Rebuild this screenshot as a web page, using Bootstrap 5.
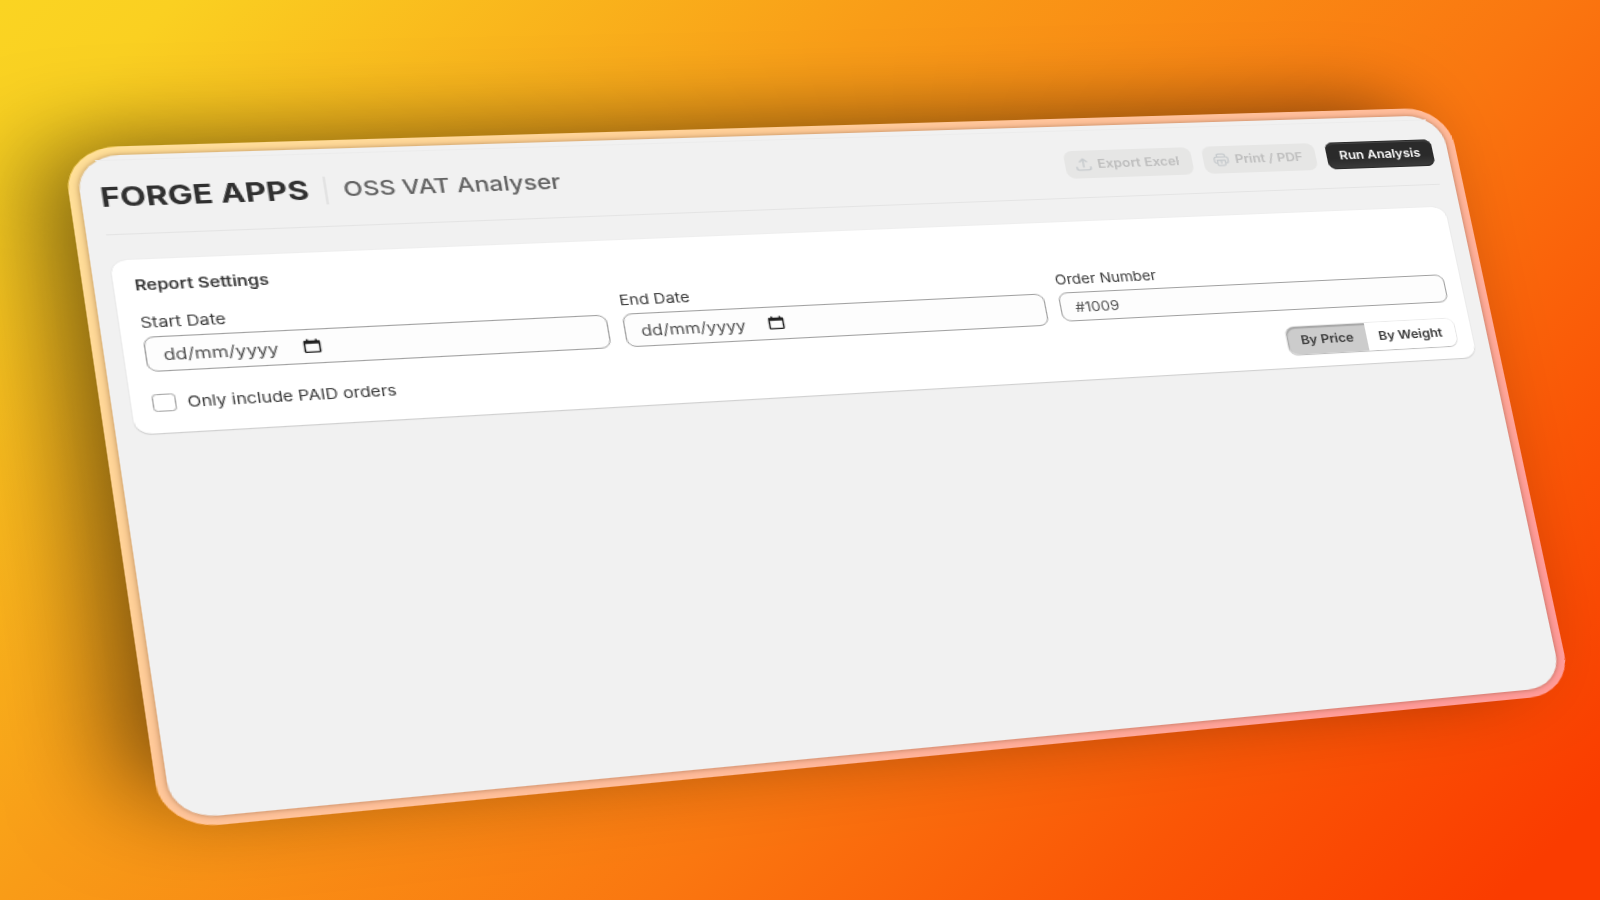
<!DOCTYPE html>
<html lang="en">
<head>
<meta charset="utf-8">
<meta name="viewport" content="width=device-width, initial-scale=1">
<title>OSS VAT Analyser</title>
<link href="https://cdn.jsdelivr.net/npm/bootstrap@5.3.0/dist/css/bootstrap.min.css" rel="stylesheet">
<style>
  body {
    font-family: Inter, "Liberation Sans", sans-serif;
    font-size: 13px;
    line-height: 20px;
    color: #383838;
    background: linear-gradient(135deg, #fad422 0%, #fad021 7%, #f99c17 36%, #fa7710 62%, #fa5606 80%, #fa3c00 96%);
  }
  /* The tilted window: its four corners are projected by the script below */
  .tilt-frame {
    width: 71vw;
    height: 606px;
    padding: 8px;
    border-radius: 40px;
    background: linear-gradient(140deg, #ffe098 0%, #ffcf98 28%, #ffc49a 40%, #ffba9a 62%, #ffab99 75%, #ff9b98 90%);
    box-shadow: -30px -14px 80px -14px rgba(0, 0, 0, .56);
    transform-origin: 0 0;
  }
  .window-pane {
    border-radius: 32px;
    background: #f1f1f1;
    box-shadow: 0 0 5px rgba(90, 40, 0, .45);
    padding: 4px 14px 14px;
  }
  .app-header {
    height: 69px;
    border-top: 1px solid #ececec;
    border-bottom: 1px solid #e4e4e4;
  }
  .header-brand { gap: 12px; }
  .header-actions { gap: 10px; }
  .app-brand { font-size: 24px; line-height: 28px; font-weight: 650; color: #303030; }
  .app-title { font-size: 19px; line-height: 28px; color: #616161; }
  .brand-rule { width: 2px; height: 26px; background: #e3e3e3; }
  .app-btn {
    font-size: 12px;
    line-height: 16px;
    font-weight: 600;
    height: 28px;
    padding: 0 12px;
    border: 0;
    border-radius: 8px;
  }
  .app-btn:disabled { background: #e6e6e5; color: #bdbdbd; opacity: 1; padding-left: 8px; }
  .app-btn:disabled svg { stroke: #c6cacd; }
  .app-btn-dark, .app-btn-dark:hover {
    color: #fff;
    background: linear-gradient(#2a2a2a 60%, #3c3c3c);
    box-shadow: inset 0 0 0 1px #2b2b2b, inset 0 2px 0 #454545;
  }
  .settings-card {
    margin-top: 23px;
    padding: 15px 15px 13px;
    border-radius: 12px;
    background: #fff;
    box-shadow: 0 1px 1px rgba(0, 0, 0, .14), 0 0 1px rgba(0, 0, 0, .14);
  }
  .settings-card h2 { font-size: 13px; line-height: 16px; font-weight: 600; margin-bottom: 16px; }
  .settings-fields { --bs-gutter-x: 12px; }
  .field-label { display: block; margin-bottom: 3px; }
  .field-box, .field-box:focus {
    font-size: 13px;
    line-height: 20px;
    height: 29px;
    padding: 0 12px;
    border: 1px solid #a0a0a0;
    border-radius: 8px;
    background: #fdfdfd;
    color: #505050;
  }
  .field-box::placeholder { color: #505050; }
  .field-date, .field-date:focus { height: 32px; font-size: 14px; }
  .date-glyph { position: absolute; left: 114px; top: 9px; }
  .settings-foot { margin-top: 14px; }
  .paid-check { width: 17px; height: 16px; border: 1px solid #a8a8a8; border-radius: 4px; margin: 0; }
  .basis-group { border-radius: 8px; box-shadow: 0 1px 1px rgba(0, 0, 0, .22), 0 0 0 1px #ebebeb; }
  .basis-group .app-btn { background: #fff; color: #383838; }
  .basis-group .app-btn.active { background: #cccccc; box-shadow: inset 1px 2px 1px rgba(0, 0, 0, .18); }
</style>
</head>
<body class="vh-100 overflow-hidden">
<div class="tilt-frame" id="tiltFrame">
  <main class="window-pane h-100">
    <header class="app-header d-flex align-items-center justify-content-between">
      <div class="header-brand d-flex align-items-center">
        <span class="app-brand">FORGE APPS</span>
        <span class="brand-rule"></span>
        <h1 class="app-title m-0">OSS VAT Analyser</h1>
      </div>
      <div class="header-actions d-flex">
        <button type="button" class="btn app-btn d-flex align-items-center" disabled>
          <svg class="me-1" width="16" height="16" viewBox="0 0 16 16" fill="none" stroke-width="1.4" stroke-linecap="round" stroke-linejoin="round"><path d="M8 10.500V2.500M5 5.300 8 2.400l3 2.900M2 10.600v1.200c0 1 .8 1.800 1.800 1.800h8.400c1 0 1.800-.8 1.800-1.800v-1.200"/></svg>
          Export Excel
        </button>
        <button type="button" class="btn app-btn d-flex align-items-center" disabled>
          <svg class="me-1" width="16" height="16" viewBox="0 0 16 16" fill="none" stroke-width="1.3" stroke-linecap="round" stroke-linejoin="round"><path d="M4.400 5V3.600c0-.9.6-1.500 1.500-1.500h4.200c.9 0 1.500.6 1.500 1.500V5M4.400 11.400h-.6c-1.100 0-1.900-.8-1.900-1.900V7.200c0-1.200.9-2.100 2.100-2.100h8c1.200 0 2.100.9 2.100 2.100v2.300c0 1.100-.8 1.900-1.900 1.900h-.6M4.500 8.500h7v3.900c0 .9-.6 1.500-1.500 1.500H6c-.9 0-1.500-.6-1.500-1.500zM8 8.500v3"/></svg>
          Print / PDF
        </button>
        <button type="button" class="btn app-btn app-btn-dark">Run Analysis</button>
      </div>
    </header>

    <form class="settings-card">
      <h2>Report Settings</h2>
      <div class="row settings-fields">
        <div class="col-4">
          <label class="field-label" for="startDate">Start Date</label>
          <div class="position-relative">
            <input type="text" class="form-control field-box field-date" id="startDate" placeholder="dd/mm/yyyy">
            <svg class="date-glyph" width="14" height="14" viewBox="0 0 14 14"><path fill="#1f1f1f" fill-rule="evenodd" d="M3 .5h1.400v1.200h5.200V.5H11v1.200h1c.7 0 1.200.5 1.200 1.200v8.900c0 .7-.5 1.200-1.200 1.200H2c-.7 0-1.200-.5-1.200-1.200V2.900c0-.7.5-1.200 1.200-1.200h1zM2.100 4.700v7h9.800v-7z"/></svg>
          </div>
        </div>
        <div class="col-4">
          <label class="field-label" for="endDate">End Date</label>
          <div class="position-relative">
            <input type="text" class="form-control field-box field-date" id="endDate" placeholder="dd/mm/yyyy">
            <svg class="date-glyph" width="14" height="14" viewBox="0 0 14 14"><path fill="#1f1f1f" fill-rule="evenodd" d="M3 .5h1.400v1.200h5.200V.5H11v1.200h1c.7 0 1.200.5 1.200 1.200v8.900c0 .7-.5 1.200-1.200 1.200H2c-.7 0-1.200-.5-1.200-1.200V2.900c0-.7.5-1.200 1.200-1.200h1zM2.100 4.700v7h9.800v-7z"/></svg>
          </div>
        </div>
        <div class="col-4">
          <label class="field-label" for="orderNumber">Order Number</label>
          <input type="text" class="form-control field-box" id="orderNumber" placeholder="#1009">
        </div>
      </div>
      <div class="settings-foot d-flex align-items-center justify-content-between">
        <div class="d-flex align-items-center gap-2">
          <input type="checkbox" class="form-check-input paid-check" id="paidOnly">
          <label for="paidOnly">Only include PAID orders</label>
        </div>
        <div class="btn-group basis-group" role="group" aria-label="Analysis basis">
          <button type="button" class="btn app-btn active">By Price</button>
          <button type="button" class="btn app-btn">By Weight</button>
        </div>
      </div>
    </form>
  </main>
</div>
<script src="https://cdn.jsdelivr.net/npm/bootstrap@5.3.0/dist/js/bootstrap.bundle.min.js"></script>
<script>
  // Corners of the tilted window as fractions of the viewport: TL, TR, BR, BL
  const corners = [[0.0388, 0.1644], [0.9041, 0.1193], [0.9830, 0.7706], [0.1015, 0.9227]];

  function projectFrame() {
    const el = document.getElementById('tiltFrame');
    const w = el.offsetWidth, h = el.offsetHeight;
    const [[x0, y0], [x1, y1], [x2, y2], [x3, y3]] =
      corners.map(([x, y]) => [x * window.innerWidth, y * window.innerHeight]);
    const dx1 = x1 - x2, dx2 = x3 - x2, sx = x0 - x1 + x2 - x3;
    const dy1 = y1 - y2, dy2 = y3 - y2, sy = y0 - y1 + y2 - y3;
    const det = dx1 * dy2 - dx2 * dy1;
    const g = (sx * dy2 - dx2 * sy) / det, k = (dx1 * sy - sx * dy1) / det;
    const m = [
      (x1 - x0 + g * x1) / w, (y1 - y0 + g * y1) / w, 0, g / w,
      (x3 - x0 + k * x3) / h, (y3 - y0 + k * y3) / h, 0, k / h,
      0, 0, 1, 0,
      x0, y0, 0, 1
    ];
    el.style.transform = `matrix3d(${m.join(',')})`;
  }
  projectFrame();
  window.addEventListener('resize', projectFrame);
</script>
</body>
</html>
